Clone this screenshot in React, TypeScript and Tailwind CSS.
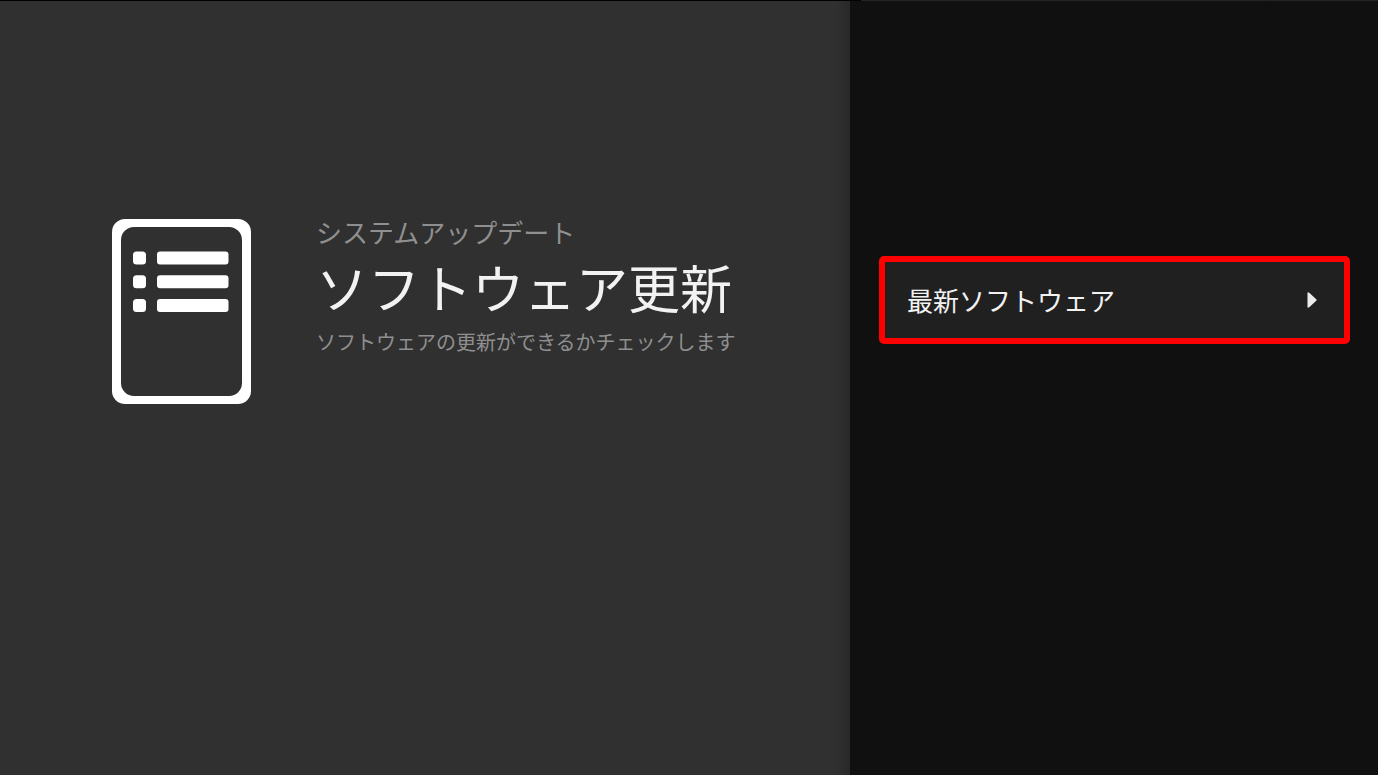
function DocumentIcon() {
  return (
    <svg viewBox="0 0 139 185" className="h-[185px] w-[139px] shrink-0 text-white" fill="currentColor" aria-hidden="true">
      <path
        fillRule="evenodd"
        d="M13 0H126A13 13 0 0 1 139 13V172A13 13 0 0 1 126 185H13A13 13 0 0 1 0 172V13A13 13 0 0 1 13 0ZM22 8A13 13 0 0 0 9 21V164A13 13 0 0 0 22 177H117A13 13 0 0 0 130 164V21A13 13 0 0 0 117 8Z"
      />
      {[32.5, 56.3, 80].map((y) => (
        <g key={y}>
          <rect x="21" y={y} width="13" height="13" rx="3.5" />
          <rect x="45" y={y} width="71.5" height="13" rx="3" />
        </g>
      ))}
    </svg>
  );
}

function UpdateSummary() {
  return (
    <main className="flex min-w-0 flex-1 items-start gap-[65px] border-t border-black bg-linear-to-l from-[#292929] to-[#303030] to-[14px] pt-[218px] pl-28">
      <DocumentIcon />
      <header className="flex flex-col whitespace-nowrap">
        <p className="text-[26px] leading-[26px] text-[#8f8f8f]">システムアップデート</p>
        <h1 className="mt-2 text-[52px] leading-[68px] text-[#f2f2f2]">ソフトウェア更新</h1>
        <p className="mt-[7px] text-[20px] leading-7 text-[#8f8f8f]">ソフトウェアの更新ができるかチェックします</p>
      </header>
    </main>
  );
}

function ActionPanel() {
  return (
    <nav className="w-[528px] shrink-0 bg-[#101010]">
      <div className="h-px bg-linear-to-r from-black from-[11px] to-[#242424] to-[11px]" />
      <div className="pt-[255px] pr-7 pl-[29px]">
        <button
          type="button"
          className="flex h-22 w-full items-center justify-between rounded-[5px] border-6 border-[#ff0000] bg-[#202020] pr-[27px] pl-[22px] text-left text-[26px] text-[#f2f2f2]"
        >
          <span className="pb-0.5">最新ソフトウェア</span>
          <svg viewBox="0 0 10 16" className="h-4 w-[10px]" fill="#ebebeb" aria-hidden="true">
            <path d="M0.5 0.5H2L9.5 7.5V8.5L2 15.5H0.5Z" />
          </svg>
        </button>
      </div>
    </nav>
  );
}

export default function App() {
  return (
    <div className="flex min-h-screen bg-[#303030] font-['Noto_Sans_CJK_JP',sans-serif]" lang="ja">
      <UpdateSummary />
      <ActionPanel />
    </div>
  );
}
